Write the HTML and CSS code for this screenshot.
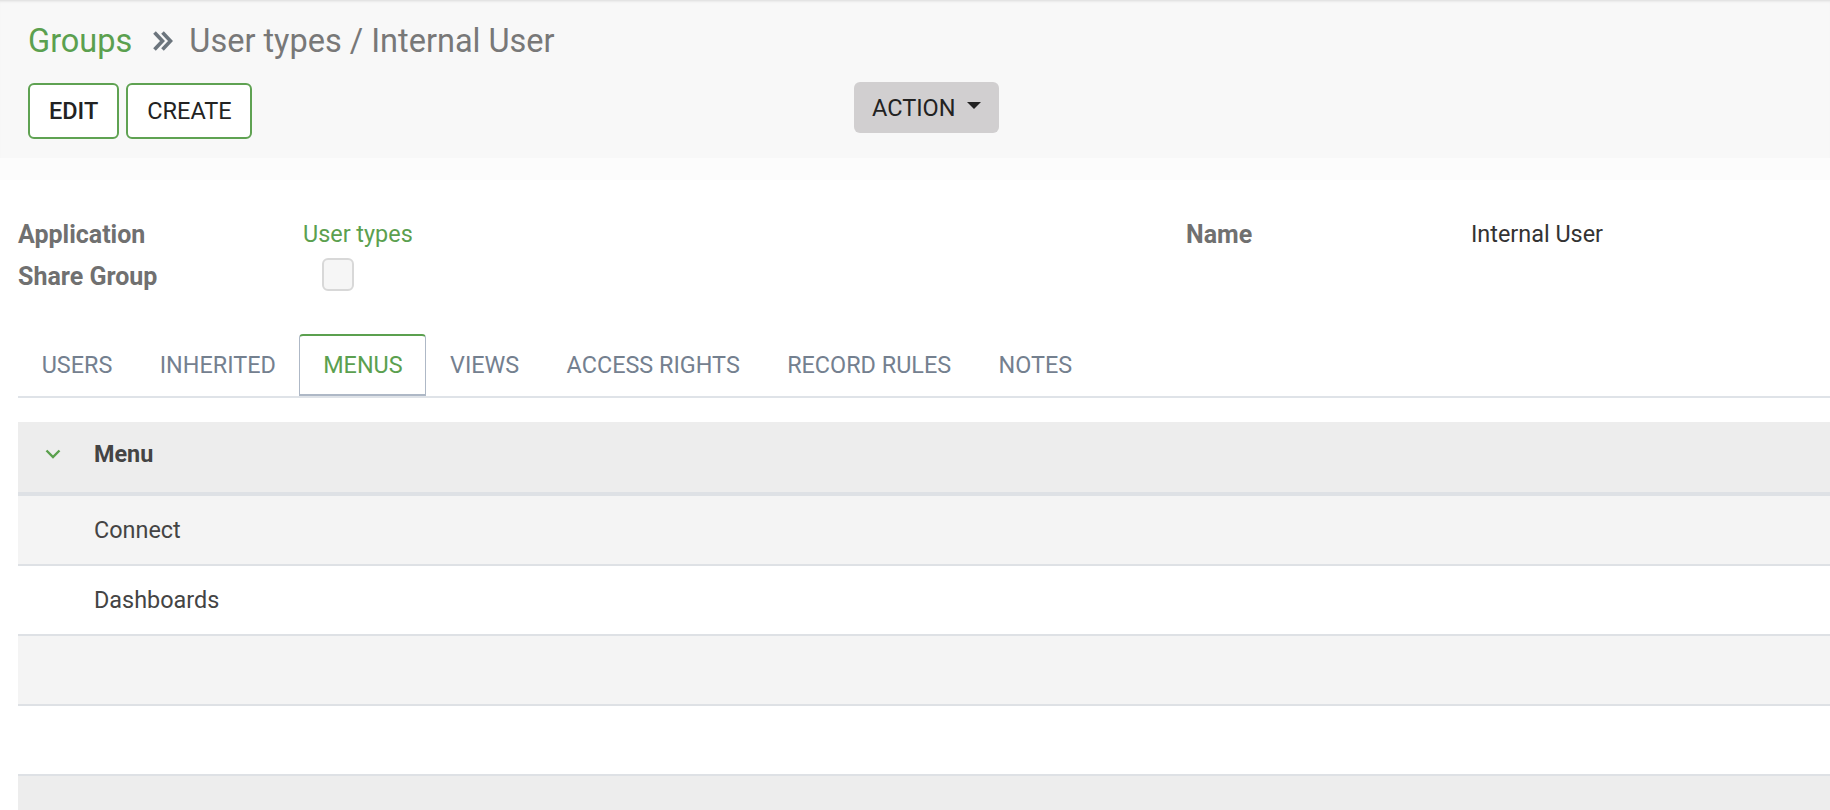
FILE: index.html
```html
<!DOCTYPE html>
<html>
<head>
<meta charset="utf-8">
<title>Groups - Internal User</title>
<link rel="stylesheet" href="styles.css">
</head>
<body>
<header class="cp">
  <div class="breadcrumb">
    <a class="bc-link">Groups</a>
    <svg class="bc-sep" viewBox="0 0 22 22" width="22" height="22"><path d="M2.5 2.5 L10.5 11 L2.5 19.5 M10.5 2.5 L18.5 11 L10.5 19.5" fill="none" stroke="#6c757d" stroke-width="3.6"/></svg>
    <span class="bc-active">User types / Internal User</span>
  </div>
  <div class="cp-bottom">
    <div class="cp-buttons">
      <button class="btn btn-edit">EDIT</button>
      <button class="btn btn-create">CREATE</button>
    </div>
    <div class="cp-actions">
      <button class="btn-action">ACTION<span class="caret"></span></button>
    </div>
  </div>
</header>
<main class="sheet">
  <div class="groups">
    <div class="group">
      <div class="field-row">
        <div class="label">Application</div>
        <div class="value link">User types</div>
      </div>
      <div class="field-row">
        <div class="label">Share Group</div>
        <div class="value"><span class="checkbox"></span></div>
      </div>
    </div>
    <div class="group">
      <div class="field-row">
        <div class="label">Name</div>
        <div class="value">Internal User</div>
      </div>
    </div>
  </div>
  <nav class="tabs">
    <div class="tab">USERS</div>
    <div class="tab">INHERITED</div>
    <div class="tab active">MENUS</div>
    <div class="tab">VIEWS</div>
    <div class="tab">ACCESS RIGHTS</div>
    <div class="tab">RECORD RULES</div>
    <div class="tab">NOTES</div>
  </nav>
  <div class="list">
    <div class="list-head">
      <div class="cell-handle"><svg viewBox="0 0 16 10" width="16" height="10"><path d="M1.5 1.5 L8 8 L14.5 1.5" fill="none" stroke="#5aa04d" stroke-width="2.4"/></svg></div>
      <div class="cell">Menu</div>
    </div>
    <div class="list-row odd"><div class="cell-handle"></div><div class="cell">Connect</div></div>
    <div class="list-row"><div class="cell-handle"></div><div class="cell">Dashboards</div></div>
    <div class="list-row odd"><div class="cell-handle"></div><div class="cell"></div></div>
    <div class="list-row"><div class="cell-handle"></div><div class="cell"></div></div>
    <div class="list-foot"></div>
  </div>
</main>
</body>
</html>
```
FILE: styles.css
```css
html, body {
  margin: 0;
  padding: 0;
  overflow: hidden;
  background: #fff;
  font-family: Roboto, "Liberation Sans", sans-serif;
  font-size: 23.4px;
  color: #444;
}

.cp {
  background: #f8f8f8;
  box-shadow: inset 0 3px 3px -2px rgba(0, 0, 0, 0.12);
  padding: 21px 0 19px 28px;
}

.breadcrumb {
  display: flex;
  align-items: center;
  height: 40px;
  font-size: 32.5px;
  line-height: 40px;
}

.bc-link {
  color: #5ba04f;
}

.bc-sep {
  margin: 0 15px 0 20px;
}

.bc-active {
  color: #787878;
}

.cp-bottom {
  display: grid;
  grid-template-columns: 826px auto;
  align-items: start;
  margin-top: 22px;
}

.cp-buttons {
  display: flex;
  gap: 7px;
}

.btn {
  height: 56px;
  border: 2px solid #5fa252;
  border-radius: 6px;
  background: #fff;
  font-family: Roboto, "Liberation Sans", sans-serif;
  font-size: 23.5px;
  color: #222;
  padding: 0 19px;
  cursor: pointer;
}

.btn-edit {
  font-weight: 500;
}

.btn-create {
  padding: 0 18px 0 19px;
}

.cp-actions {
  margin-top: -1px;
}

.btn-action {
  display: flex;
  align-items: center;
  height: 51px;
  padding: 0 18px;
  background: #d1cfd0;
  border: 0;
  border-radius: 6px;
  font-family: Roboto, "Liberation Sans", sans-serif;
  font-size: 23.5px;
  color: #222;
}

.caret {
  display: inline-block;
  margin-left: 11px;
  width: 0;
  height: 0;
  border-left: 7px solid transparent;
  border-right: 7px solid transparent;
  border-top: 7px solid #222;
  position: relative;
  top: -2px;
}

.sheet {
  padding: 55px 0 0 18px;
  background: linear-gradient(#fcfcfc 0, #fcfcfc 22px, #fff 22px);
}

.groups {
  display: grid;
  grid-template-columns: 1168px 1fr;
}

.field-row {
  display: grid;
  grid-template-columns: 285px 1fr;
  align-items: center;
  height: 42px;
}

.label {
  font-weight: 700;
  color: #707070;
  font-size: 25px;
}

.value {
  color: #333;
}

.value.link {
  color: #5ba04f;
}

.checkbox {
  display: block;
  margin-left: 19px;
  width: 28px;
  height: 29px;
  border: 2px solid #d8d8d8;
  border-radius: 6px;
  background: #f6f6f6;
  position: relative;
  top: -2px;
}

.tabs {
  display: flex;
  margin-top: 37px;
  border-bottom: 2px solid #dfe3e8;
}

.tab {
  display: flex;
  align-items: center;
  height: 58px;
  padding: 0 22.7px 2px;
  border: 1px solid transparent;
  border-top-width: 2px;
  border-bottom: 0;
  color: #74808f;
  font-size: 23.4px;
}

.tab.active {
  color: #5ba04f;
  border-color: #5ba04f #aeb8c6 #aeb8c6;
  border-top-width: 2px;
  border-bottom: 2px solid #aeb8c6;
  border-radius: 4px 4px 0 0;
  margin-bottom: -2px;
  height: 58px;
  padding-bottom: 0;
}

.list {
  margin-top: 24px;
}

.list-head,
.list-row,
.list-foot {
  display: flex;
  align-items: center;
}

.list-head {
  height: 74px;
  box-sizing: border-box;
  padding-bottom: 6px;
  background: #ededed;
  border-bottom: 4px solid #dee1e5;
  font-weight: 700;
  color: #444;
}

.list-row {
  height: 68px;
  border-bottom: 2px solid #dee1e5;
  background: #fff;
}

.list-row.odd {
  background: #f4f4f4;
}

.list-foot {
  height: 60px;
  background: #ededed;
}

.cell-handle {
  width: 76px;
  flex: none;
  display: flex;
  align-items: center;
  padding-left: 27px;
  box-sizing: border-box;
}

.cell {
  color: #444;
}
```
